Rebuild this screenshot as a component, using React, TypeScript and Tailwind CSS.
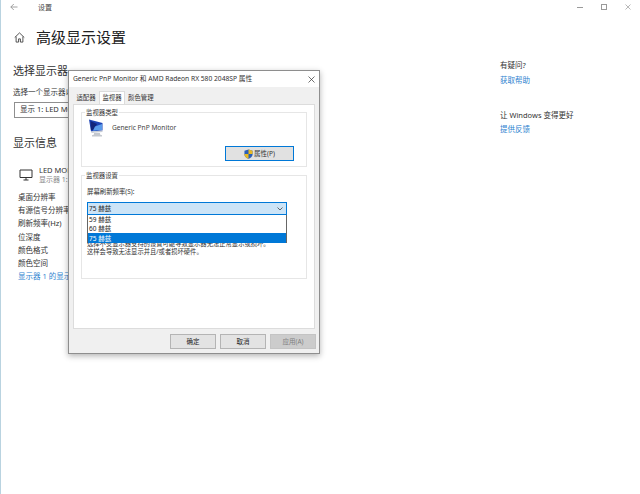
import React from "react";

const font = { fontFamily: '"Noto Sans", "Noto Sans CJK SC", sans-serif' };

function Shield() {
  return (
    <svg width="9" height="10" viewBox="0 0 10 11">
      <path d="M5 0.5 L9.5 2 V6 C9.5 8.5 7 10 5 10.8 C3 10 0.5 8.5 0.5 6 V2 Z" fill="#2b5fb8" />
      <path d="M5 0.5 L9.5 2 V5.5 H5 Z" fill="#e8b923" />
      <path d="M5 5.5 H0.5 V6 C0.5 8.5 3 10 5 10.8 Z" fill="#e8b923" />
    </svg>
  );
}

function MonitorPic() {
  return (
    <svg width="16" height="18" viewBox="0 0 16 18">
      <path d="M1 0.5 L14.5 4 V11.5 L3 12.5 Z" fill="#1d43b5" />
      <path d="M2.5 2 L9 5 L5 11 L3 11 Z" fill="#12247a" />
      <path d="M7 7.5 L14 5 V11 L5 11.8 Z" fill="#5a9bea" />
      <path d="M3 12.5 L14.5 11.5 V13 L3.5 14 Z" fill="#c9ced6" />
      <path d="M6 14 H12 V15.5 L14 16.2 V17.5 H4 V16.2 L6 15.5 Z" fill="#c4c8ce" />
    </svg>
  );
}

function FooterButton({ label, disabled }: { label: string; disabled?: boolean }) {
  return (
    <div
      className={
        disabled
          ? "w-[46px] h-[15px] flex items-center justify-center bg-[#cccccc] border border-[#c4c4c4] text-[#7f7f7f] text-[6.5px]"
          : "w-[46px] h-[15px] flex items-center justify-center bg-[#e3e3e3] border border-[#b4b4b4] text-[#222222] text-[6.5px]"
      }
    >
      {label}
    </div>
  );
}

function Group({ title, className, children }: { title: string; className: string; children: React.ReactNode }) {
  return (
    <div className={"relative border border-[#e6e6e6] mx-[7px] " + className}>
      <span className="absolute left-[3px] top-[-5px] bg-white px-[1px] leading-[9px] text-[6.4px] text-[#333333]">{title}</span>
      {children}
    </div>
  );
}

export default function App() {
  return (
    <div className="relative w-[640px] h-[494px] bg-white overflow-hidden text-[#222222]" style={font}>
      <div className="flex h-full border-l border-[#b9d3e0]">
        <div className="w-[498px] shrink-0 flex flex-col">
          <div className="h-[14px] flex items-center pl-[9px] gap-[20px]">
            <svg width="8" height="8" viewBox="0 0 8 8" fill="none" stroke="#8a8a8a" strokeWidth="0.8">
              <path d="M7.5 4H0.8M3.8 1L0.8 4L3.8 7" />
            </svg>
            <span className="text-[7px] leading-none text-[#444444]">设置</span>
          </div>
          <div className="mt-[13px] h-[20px] flex items-center pl-[13px] gap-[11px]">
            <svg width="11" height="11" viewBox="0 0 12 12" fill="none" stroke="#333333" strokeWidth="0.9">
              <path d="M0.8 6L6 1L11.2 6M2.3 5V11H5V7.5H7V11H9.7V5" />
            </svg>
            <span className="text-[15px] leading-none text-[#222222]">高级显示设置</span>
          </div>
          <div className="mt-[17px] pl-[12px] text-[11px] leading-[14px] text-[#333333]">选择显示器</div>
          <div className="mt-[9px] pl-[12px] text-[7.5px] leading-[10px] text-[#333333]">选择一个显示器以查看或更改它的设置。</div>
          <div className="mt-[5px] ml-[13px] w-[120px] h-[16px] border border-[#8f8f8f] flex items-center pl-[5px] text-[7.5px] text-[#333333]">显示 1: LED MONITOR</div>
          <div className="mt-[18px] pl-[12px] text-[11px] leading-[14px] text-[#333333]">显示信息</div>
          <div className="mt-[15px] ml-[18px] flex items-center gap-[6px]">
            <svg width="14" height="12" viewBox="0 0 14 12" fill="none" stroke="#333333" strokeWidth="1">
              <path d="M1 1H13V8.5H1ZM7 8.5V11M4.5 11H9.5" />
            </svg>
            <div className="flex flex-col">
              <span className="text-[7.5px] leading-[10px] text-[#333333]">LED MONITOR</span>
              <span className="text-[7px] leading-[10px] text-[#8a8a8a]">显示器 1: 已连接到</span>
            </div>
          </div>
          <div className="mt-[6px] pl-[17px] flex flex-col text-[7.5px] leading-[13.2px] text-[#333333]">
            <span>桌面分辨率</span>
            <span>有源信号分辨率</span>
            <span>刷新频率(Hz)</span>
            <span>位深度</span>
            <span>颜色格式</span>
            <span>颜色空间</span>
            <span className="text-[#2f84d0]">显示器 1 的显示适配器属性</span>
          </div>
        </div>
        <div className="flex-1 flex flex-col">
          <div className="h-[14px] flex items-center justify-end pr-[9px] gap-[18px] text-[#8a8a8a]">
            <div className="w-[6px] h-px bg-[#9a9a9a]" />
            <div className="w-[6px] h-[6px] border border-[#9a9a9a]" />
            <svg width="6" height="6" viewBox="0 0 6 6" stroke="#9a9a9a" strokeWidth="0.7">
              <path d="M0.5 0.5L5.5 5.5M5.5 0.5L0.5 5.5" />
            </svg>
          </div>
          <div className="mt-[46px] pl-[1px] text-[7.5px] leading-[10px] text-[#333333]">有疑问?</div>
          <div className="mt-[5px] pl-[1px] text-[7.5px] leading-[10px] text-[#2f84d0]">获取帮助</div>
          <div className="mt-[25px] pl-[1px] text-[7.5px] leading-[10px] text-[#333333]">让 Windows 变得更好</div>
          <div className="mt-[4px] pl-[1px] text-[7.5px] leading-[10px] text-[#2f84d0]">提供反馈</div>
        </div>
      </div>

      {/* Property dialog window */}
      <div className="absolute left-[68px] top-[70px] w-[252px] h-[284px] bg-[#f0f0f0] border border-[#8e8e8e] shadow-[0_2px_6px_rgba(0,0,0,0.3)] flex flex-col">
        <div className="h-[16px] bg-white flex items-center justify-between pl-[4px] pr-[4px]">
          <span className="text-[6.7px] leading-none text-[#333333]">Generic PnP Monitor 和 AMD Radeon RX 580 2048SP 属性</span>
          <svg width="7" height="7" viewBox="0 0 7 7" stroke="#333333" strokeWidth="0.7">
            <path d="M0.5 0.5L6.5 6.5M6.5 0.5L0.5 6.5" />
          </svg>
        </div>
        <div className="mt-[4px] flex items-end pl-[4px] h-[13px] text-[6.4px] leading-none text-[#333333]">
          <div className="w-[26px] h-[12px] flex items-center justify-center">适配器</div>
          <div className="w-[26px] h-[13px] flex items-center justify-center bg-white border border-b-0 border-[#dcdcdc]">监视器</div>
          <div className="h-[12px] pl-[3px] flex items-center">颜色管理</div>
        </div>
        <div className="mx-[4px] h-[225px] bg-white border border-[#dcdcdc] pt-[7px] flex flex-col">
          <Group title="监视器类型" className="h-[55px] shrink-0">
            <div className="flex items-center pl-[6px] pt-[6px] gap-[8px]">
              <MonitorPic />
              <span className="text-[6.6px] leading-none text-[#444444]">Generic PnP Monitor</span>
            </div>
            <div className="absolute right-[12px] bottom-[5px] w-[69px] h-[15px] bg-[#e1e1e1] border border-[#0078d7] flex items-center justify-center gap-[1px] text-[6.5px] text-[#333333]">
              <Shield />
              <span>属性(P)</span>
            </div>
          </Group>
          <Group title="监视器设置" className="mt-[8px] h-[104px] shrink-0">
            <div className="pl-[5px] pt-[11px] text-[6.4px] leading-[10px] text-[#333333]">屏幕刷新频率(S):</div>
            <div className="relative ml-[5px] mt-[5px] w-[200px] h-[13px] bg-[#cce4f7] border border-[#0078d7] flex items-center justify-between pl-[1px] pr-[3px] text-[6.5px] text-[#222222]">
              <span>75 赫兹</span>
              <svg width="6" height="4" viewBox="0 0 6 4" fill="none" stroke="#444444" strokeWidth="0.8">
                <path d="M0.5 0.5L3 3L5.5 0.5" />
              </svg>
              <div className="absolute left-[-1px] top-[12px] w-[200px] h-[28px] bg-white border-x border-[#666666] flex flex-col text-[6.5px] leading-[9px] text-[#222222]">
                <span className="pl-[1px] h-[9px] flex items-center">59 赫兹</span>
                <span className="pl-[1px] h-[9px] flex items-center">60 赫兹</span>
                <span className="pl-[1px] h-[10px] flex items-center bg-[#0078d7] text-white">75 赫兹</span>
              </div>
            </div>
            <div className="ml-[5px] mt-[25px] text-[6.3px] leading-[8px] text-[#333333] whitespace-nowrap w-[200px]">
              <div>选择不受显示器支持的设置可能导致显示器无法正常显示或损坏。</div>
              <div>这样会导致无法显示并且/或者损坏硬件。</div>
            </div>
          </Group>
        </div>
        <div className="mt-[5px] flex justify-end gap-[4px] pr-[3px]">
          <FooterButton label="确定" />
          <FooterButton label="取消" />
          <FooterButton label="应用(A)" disabled />
        </div>
      </div>
    </div>
  );
}
